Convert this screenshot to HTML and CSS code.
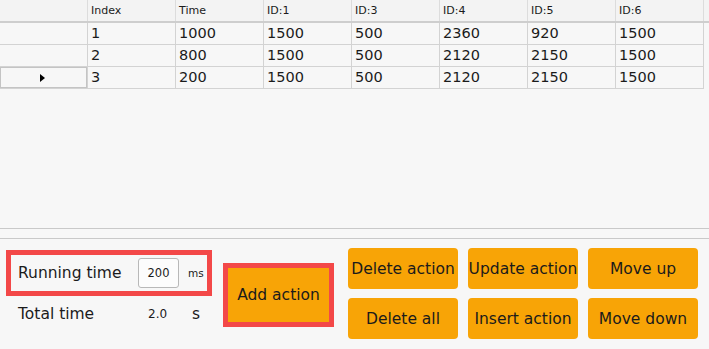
FILE: index.html
```html
<html>
<head>
    <meta charset="utf-8">
    <title>Action table</title>
    <link rel="stylesheet" href="styles.css">
</head>
<body>
    <div class="table-view">
        <div class="head-row">
            <div class="head-cell"></div>
            <div class="head-cell">Index</div>
            <div class="head-cell">Time</div>
            <div class="head-cell">ID:1</div>
            <div class="head-cell">ID:3</div>
            <div class="head-cell">ID:4</div>
            <div class="head-cell">ID:5</div>
            <div class="head-cell">ID:6</div>
            <div class="head-fill"></div>
        </div>
        <div class="row">
            <div class="row-head"></div>
            <div class="cell">1</div>
            <div class="cell">1000</div>
            <div class="cell">1500</div>
            <div class="cell">500</div>
            <div class="cell">2360</div>
            <div class="cell">920</div>
            <div class="cell">1500</div>
        </div>
        <div class="row">
            <div class="row-head"></div>
            <div class="cell">2</div>
            <div class="cell">800</div>
            <div class="cell">1500</div>
            <div class="cell">500</div>
            <div class="cell">2120</div>
            <div class="cell">2150</div>
            <div class="cell">1500</div>
        </div>
        <div class="row">
            <div class="row-head current"><span class="arrow"></span></div>
            <div class="cell">3</div>
            <div class="cell">200</div>
            <div class="cell">1500</div>
            <div class="cell">500</div>
            <div class="cell">2120</div>
            <div class="cell">2150</div>
            <div class="cell">1500</div>
        </div>
    </div>

    <div class="panel">
        <div class="left">
            <div class="run-box">
                <span class="run-label">Running time</span>
                <input type="text" class="run-input" value="200" />
                <span class="unit-ms">ms</span>
            </div>
            <div class="total-row">
                <span class="total-label">Total time</span>
                <span class="total-value">2.0</span>
                <span class="unit-s">s</span>
            </div>
        </div>
        <button class="add-btn">Add action</button>
        <div class="btn-grid">
            <button class="btn">Delete action</button>
            <button class="btn">Update action</button>
            <button class="btn">Move up</button>
            <button class="btn">Delete all</button>
            <button class="btn">Insert action</button>
            <button class="btn">Move down</button>
        </div>
    </div>
</body>
</html>
```

FILE: styles.css
```css
body{
    margin: 0;
    width: 709px;
    height: 349px;
    overflow: hidden;
    background: #f7f7f7;
    color: #1b1b1b;
    font-family: "DejaVu Sans", "Noto Sans", sans-serif;
}

.table-view{
    height: 229px;
    box-sizing: border-box;
    border-bottom: 1px solid #c9c9c9;
}

.head-row{
    display: grid;
    grid-template-columns: 88px repeat(7, 88px) 1fr;
    height: 23px;
    box-sizing: border-box;
    background: #f3f3f3;
    border-bottom: 2px solid #cecece;
}

.head-cell{
    border-right: 1px solid #dcdcdc;
    padding-left: 3px;
    font-size: 11px;
    line-height: 21px;
}

.row{
    display: grid;
    grid-template-columns: 88px repeat(7, 88px);
    height: 22px;
}

.row-head,
.cell{
    box-sizing: border-box;
    border-right: 1px solid #d3d3d3;
    border-bottom: 1px solid #d3d3d3;
}

.cell{
    padding-left: 3px;
    font-size: 14.5px;
    line-height: 21px;
}

.row-head.current{
    display: flex;
    align-items: center;
    justify-content: center;
    box-shadow: inset 0 0 0 1px #c4c4c4, inset -1px 0 0 1px #f7f7f7;
}

.arrow{
    width: 0;
    height: 0;
    margin-left: -2px;
    border-left: 5px solid #000;
    border-top: 4px solid transparent;
    border-bottom: 4px solid transparent;
}

.panel{
    display: flex;
    align-items: flex-start;
    margin-top: 9px;
    padding: 9px 0 0 6px;
    border-top: 1px solid #c9c9c9;
}

.left{
    width: 206px;
    margin-top: 2px;
}

.run-box{
    display: flex;
    align-items: center;
    height: 46px;
    box-sizing: border-box;
    padding-left: 7px;
    border: 5px solid #f34848;
}

.run-label,
.total-label{
    font-size: 15.5px;
}

.run-label{
    width: 120px;
}

.run-input{
    width: 41px;
    height: 30px;
    box-sizing: border-box;
    padding: 0;
    border: 1px solid #b8b8b8;
    border-radius: 3px;
    background: #fcfcfc;
    color: #1b1b1b;
    text-align: center;
    font-family: "DejaVu Sans", sans-serif;
    font-size: 11.5px;
}

.unit-ms{
    margin-left: 9px;
    font-size: 10.5px;
}

.total-row{
    display: flex;
    align-items: center;
    height: 36px;
    padding-left: 12px;
}

.total-label{
    width: 130px;
}

.total-value{
    width: 44px;
    font-size: 12px;
}

.unit-s{
    font-size: 15.5px;
}

.add-btn{
    width: 111px;
    height: 64px;
    margin: 15px 0 0 11px;
    box-sizing: border-box;
    padding: 0;
    border: 5px solid #f34848;
    background: #f8a406;
    color: #1b1b1b;
    font-family: "DejaVu Sans", sans-serif;
    font-size: 15.5px;
}

.btn-grid{
    display: grid;
    grid-template-columns: repeat(3, 110px);
    grid-template-rows: 41px 41px;
    column-gap: 10px;
    row-gap: 9px;
    margin-left: 14px;
}

.btn{
    padding: 0;
    border: none;
    border-radius: 4px;
    background: #f8a406;
    color: #1b1b1b;
    white-space: nowrap;
    font-family: "DejaVu Sans", sans-serif;
    font-size: 15.5px;
}
```
